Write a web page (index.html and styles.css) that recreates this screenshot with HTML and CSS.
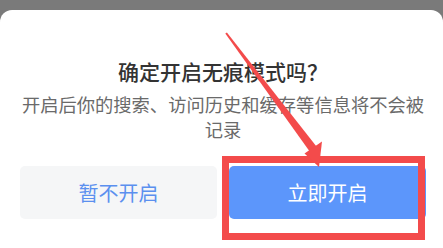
FILE: index.html
```html
<!DOCTYPE html>
<html lang="zh-CN">
<head>
<meta charset="utf-8">
<link rel="stylesheet" href="styles.css">
</head>
<body>
<div class="screen">
  <div class="card">
    <h1 class="title">确定开启无痕模式吗？</h1>
    <p class="desc">开启后你的搜索、访问历史和缓存等信息将不会被记录</p>
    <div class="actions">
      <button class="btn btn-cancel">暂不开启</button>
      <button class="btn btn-ok">立即开启</button>
    </div>
  </div>
  <div class="mark-box"></div>
  <svg class="mark-arrow" width="443" height="248" viewBox="0 0 443 248">
    <polygon points="225.3,33.5 226.9,32.4 316.5,146.5 309.5,151.2" fill="#f34b4b"/>
    <polygon points="304.5,153.5 322,141.5 319,167" fill="#f34b4b"/>
  </svg>
</div>
</body>
</html>
```
FILE: styles.css
```css
html, body {
  margin: 0;
  padding: 0;
}
body {
  width: 443px;
  height: 248px;
  overflow: hidden;
  background: #7a7a7a;
  font-family: "Noto Sans CJK SC", "Noto Sans", sans-serif;
}
.screen {
  position: relative;
  width: 443px;
  height: 248px;
  padding-top: 10px;
  box-sizing: border-box;
}
.card {
  background: #ffffff;
  border-radius: 12px 12px 0 0;
  height: 238px;
  padding: 46px 17px 0 20px;
  box-sizing: border-box;
  display: flex;
  flex-direction: column;
  align-items: center;
}
.title {
  margin: 0;
  font-size: 21px;
  line-height: 30px;
  font-weight: 500;
  color: #333333;
  text-align: center;
}
.desc {
  margin: 6px 0 0;
  width: 410px;
  font-size: 18.3px;
  line-height: 25px;
  color: #6a6a6a;
  text-align: center;
}
.actions {
  margin-top: 24px;
  width: 100%;
  display: flex;
  gap: 12px;
}
.btn {
  flex: 1;
  height: 53px;
  border: none;
  border-radius: 5px;
  font-family: inherit;
  font-size: 20px;
  padding: 0;
}
.btn-cancel {
  background: #f5f6f7;
  color: #5b90ef;
}
.btn-ok {
  background: #5c96fb;
  color: #ffffff;
}
.mark-box {
  position: absolute;
  left: 222px;
  top: 156px;
  width: 203px;
  height: 84px;
  box-sizing: border-box;
  border: 7px solid #f34b4b;
}
.mark-arrow {
  position: absolute;
  left: 0;
  top: 0;
  pointer-events: none;
}
```
